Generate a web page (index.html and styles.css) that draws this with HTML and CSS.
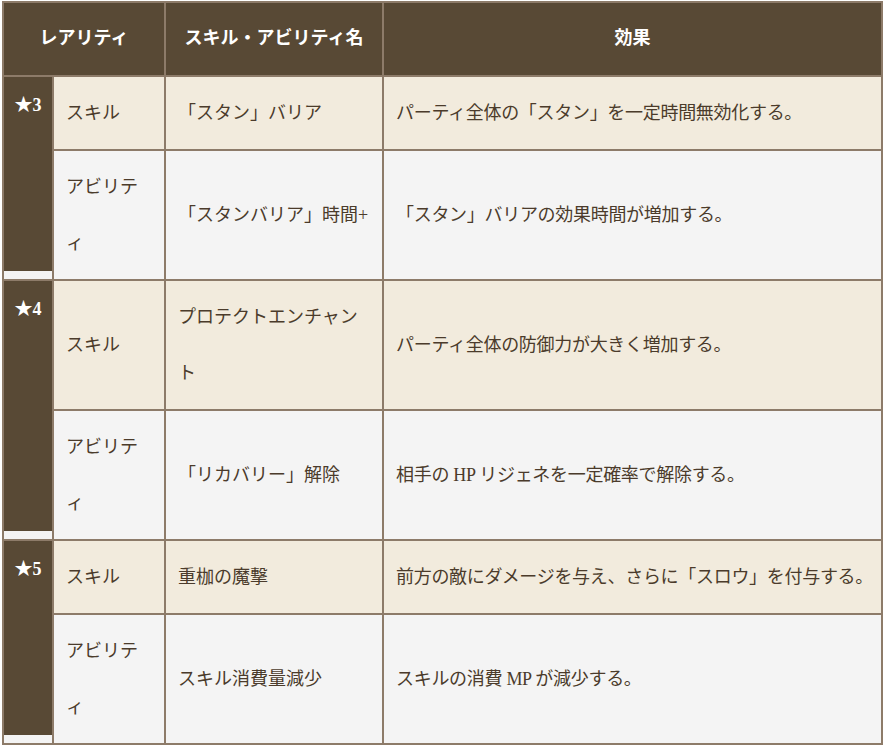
FILE: index.html
```html
<!DOCTYPE html>
<html lang="ja">
<head>
    <meta charset="UTF-8">
    <title>スキル・アビリティ一覧</title>
    <link rel="stylesheet" href="styles.css">
</head>
<body>
    <table class="skill-table">
        <colgroup>
            <col class="col-rarity">
            <col class="col-type">
            <col class="col-name">
            <col class="col-effect">
        </colgroup>
        <thead>
            <tr>
                <th colspan="2">レアリティ</th>
                <th>スキル・アビリティ名</th>
                <th>効果</th>
            </tr>
        </thead>
        <tbody>
            <tr class="row-skill">
                <td class="rarity" rowspan="2">★3</td>
                <td>スキル</td>
                <td>「スタン」バリア</td>
                <td class="effect">パーティ全体の「スタン」を一定時間無効化する。</td>
            </tr>
            <tr class="row-ability">
                <td>アビリティ</td>
                <td>「スタンバリア」時間+</td>
                <td class="effect">「スタン」バリアの効果時間が増加する。</td>
            </tr>
            <tr class="row-skill">
                <td class="rarity" rowspan="2">★4</td>
                <td>スキル</td>
                <td>プロテクトエンチャント</td>
                <td class="effect">パーティ全体の防御力が大きく増加する。</td>
            </tr>
            <tr class="row-ability">
                <td>アビリティ</td>
                <td>「リカバリー」解除</td>
                <td class="effect">相手の HP リジェネを一定確率で解除する。</td>
            </tr>
            <tr class="row-skill">
                <td class="rarity" rowspan="2">★5</td>
                <td>スキル</td>
                <td>重枷の魔撃</td>
                <td class="effect">前方の敵にダメージを与え、さらに「スロウ」を付与する。</td>
            </tr>
            <tr class="row-ability">
                <td>アビリティ</td>
                <td>スキル消費量減少</td>
                <td class="effect">スキルの消費 MP が減少する。</td>
            </tr>
        </tbody>
    </table>
</body>
</html>
```

FILE: styles.css
```css
body {
    margin: 0;
    background-color: #ffffff;
    font-family: 'Liberation Serif', 'Noto Sans CJK JP', serif;
    color: #4b3b2b;
}
.skill-table {
    margin: 1px 0 0 2px;
    border-spacing: 0;
    table-layout: fixed;
    width: 881px;
    border-top: 2px solid #8d7b69;
    border-left: 2px solid #8d7b69;
    font-size: 18px;
}
.col-rarity { width: 50px; }
.col-type { width: 112px; }
.col-name { width: 218px; }
.col-effect { width: 499px; }

.skill-table th,
.skill-table td {
    border-right: 2px solid #8d7b69;
    border-bottom: 2px solid #8d7b69;
    padding: 8px 12px;
    line-height: 56px;
}
.skill-table th {
    padding: 5px 12px 11px;
    background-color: #584935;
    color: #ffffff;
    font-family: 'Noto Sans CJK JP', sans-serif;
    font-weight: 700;
    text-align: center;
}
.skill-table td {
    text-align: left;
    vertical-align: middle;
}
.skill-table td.effect {
    padding-right: 4px;
    letter-spacing: -0.3px;
}
.row-skill td {
    background-color: #f2ebdd;
}
.row-ability td {
    background-color: #f4f4f4;
}
/* レアリティ欄：下端に白い帯が残る */
.skill-table td.rarity {
    padding: 8px 0;
    vertical-align: top;
    text-align: center;
    line-height: 40px;
    font-weight: 700;
    color: #ffffff;
    background: linear-gradient(#584935 calc(100% - 8px), #f4f4f4 0);
}
```
